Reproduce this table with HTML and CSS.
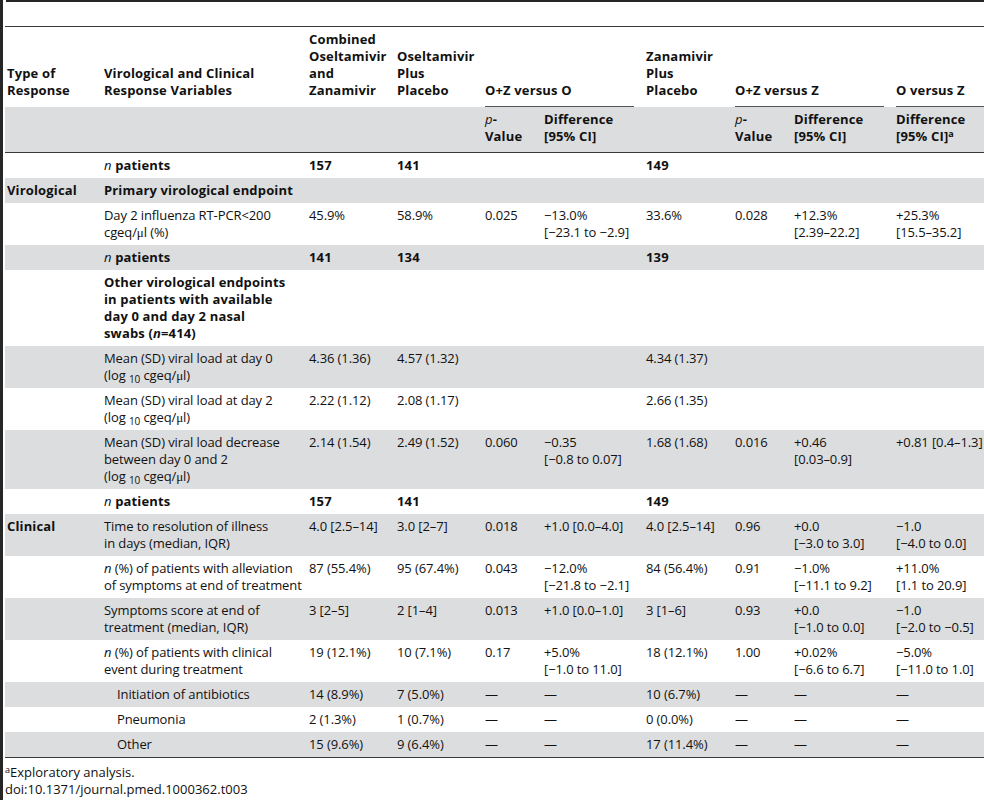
FILE: index.html
```html
<!DOCTYPE html>
<html lang="en">
<head>
  <meta charset="UTF-8">
  <title>Table 3. Virological and clinical responses</title>
  <link rel="stylesheet" href="styles.css">
</head>
<body>
  <div class="frame">
    <div class="topbar"></div>

    <table class="results">
      <colgroup>
        <col class="c-type">
        <col class="c-var">
        <col class="c-arm">
        <col class="c-arm">
        <col class="c-p">
        <col class="c-diff">
        <col class="c-arm2">
        <col class="c-p">
        <col class="c-diff">
        <col class="c-last">
      </colgroup>
      <thead>
        <tr class="head-top">
          <th>Type of<br>Response</th>
          <th>Virological and Clinical<br>Response Variables</th>
          <th>Combined<br>Oseltamivir<br>and<br>Zanamivir</th>
          <th>Oseltamivir<br>Plus<br>Placebo</th>
          <th colspan="2" class="group"><div>O+Z versus O</div></th>
          <th>Zanamivir<br>Plus<br>Placebo</th>
          <th colspan="2" class="group"><div>O+Z versus Z</div></th>
          <th class="group"><div>O versus Z</div></th>
        </tr>
        <tr class="head-sub">
          <th></th>
          <th></th>
          <th></th>
          <th></th>
          <th><i>p</i>-<br>Value</th>
          <th>Difference<br>[95% CI]</th>
          <th></th>
          <th><i>p</i>-<br>Value</th>
          <th>Difference<br>[95% CI]</th>
          <th>Difference<br>[95% CI]<sup>a</sup></th>
        </tr>
      </thead>
      <tbody>
        <tr class="count">
          <td></td>
          <td><i>n</i> <b>patients</b></td>
          <td>157</td>
          <td>141</td>
          <td></td>
          <td></td>
          <td>149</td>
          <td></td>
          <td></td>
          <td></td>
        </tr>
        <tr>
          <td><b>Virological</b></td>
          <td><b>Primary virological endpoint</b></td>
          <td></td><td></td><td></td><td></td><td></td><td></td><td></td><td></td>
        </tr>
        <tr>
          <td></td>
          <td>Day 2 influenza RT-PCR&lt;200<br>cgeq/<span class="mu">μ</span>l (%)</td>
          <td>45.9%</td>
          <td>58.9%</td>
          <td>0.025</td>
          <td>−13.0%<br>[−23.1 to −2.9]</td>
          <td>33.6%</td>
          <td>0.028</td>
          <td>+12.3%<br>[2.39–22.2]</td>
          <td>+25.3%<br>[15.5–35.2]</td>
        </tr>
        <tr class="count">
          <td></td>
          <td><i>n</i> <b>patients</b></td>
          <td>141</td>
          <td>134</td>
          <td></td>
          <td></td>
          <td>139</td>
          <td></td>
          <td></td>
          <td></td>
        </tr>
        <tr>
          <td></td>
          <td><b>Other virological endpoints<br>in patients with available<br>day 0 and day 2 nasal<br>swabs (<i>n</i>=414)</b></td>
          <td></td><td></td><td></td><td></td><td></td><td></td><td></td><td></td>
        </tr>
        <tr>
          <td></td>
          <td>Mean (SD) viral load at day 0<br>(log <sub>10</sub> cgeq/<span class="mu">μ</span>l)</td>
          <td>4.36 (1.36)</td>
          <td>4.57 (1.32)</td>
          <td></td>
          <td></td>
          <td>4.34 (1.37)</td>
          <td></td>
          <td></td>
          <td></td>
        </tr>
        <tr>
          <td></td>
          <td>Mean (SD) viral load at day 2<br>(log <sub>10</sub> cgeq/<span class="mu">μ</span>l)</td>
          <td>2.22 (1.12)</td>
          <td>2.08 (1.17)</td>
          <td></td>
          <td></td>
          <td>2.66 (1.35)</td>
          <td></td>
          <td></td>
          <td></td>
        </tr>
        <tr>
          <td></td>
          <td>Mean (SD) viral load decrease<br>between day 0 and 2<br>(log <sub>10</sub> cgeq/<span class="mu">μ</span>l)</td>
          <td>2.14 (1.54)</td>
          <td>2.49 (1.52)</td>
          <td>0.060</td>
          <td>−0.35<br>[−0.8 to 0.07]</td>
          <td>1.68 (1.68)</td>
          <td>0.016</td>
          <td>+0.46<br>[0.03–0.9]</td>
          <td>+0.81 [0.4–1.3]</td>
        </tr>
        <tr class="count">
          <td></td>
          <td><i>n</i> <b>patients</b></td>
          <td>157</td>
          <td>141</td>
          <td></td>
          <td></td>
          <td>149</td>
          <td></td>
          <td></td>
          <td></td>
        </tr>
        <tr>
          <td><b>Clinical</b></td>
          <td>Time to resolution of illness<br>in days (median, IQR)</td>
          <td>4.0 [2.5–14]</td>
          <td>3.0 [2–7]</td>
          <td>0.018</td>
          <td>+1.0 [0.0–4.0]</td>
          <td>4.0 [2.5–14]</td>
          <td>0.96</td>
          <td>+0.0<br>[−3.0 to 3.0]</td>
          <td>−1.0<br>[−4.0 to 0.0]</td>
        </tr>
        <tr>
          <td></td>
          <td><i>n</i> (%) of patients with alleviation<br>of symptoms at end of treatment</td>
          <td>87 (55.4%)</td>
          <td>95 (67.4%)</td>
          <td>0.043</td>
          <td>−12.0%<br>[−21.8 to −2.1]</td>
          <td>84 (56.4%)</td>
          <td>0.91</td>
          <td>−1.0%<br>[−11.1 to 9.2]</td>
          <td>+11.0%<br>[1.1 to 20.9]</td>
        </tr>
        <tr>
          <td></td>
          <td>Symptoms score at end of<br>treatment (median, IQR)</td>
          <td>3 [2–5]</td>
          <td>2 [1–4]</td>
          <td>0.013</td>
          <td>+1.0 [0.0–1.0]</td>
          <td>3 [1–6]</td>
          <td>0.93</td>
          <td>+0.0<br>[−1.0 to 0.0]</td>
          <td>−1.0<br>[−2.0 to −0.5]</td>
        </tr>
        <tr>
          <td></td>
          <td><i>n</i> (%) of patients with clinical<br>event during treatment</td>
          <td>19 (12.1%)</td>
          <td>10 (7.1%)</td>
          <td>0.17</td>
          <td>+5.0%<br>[−1.0 to 11.0]</td>
          <td>18 (12.1%)</td>
          <td>1.00</td>
          <td>+0.02%<br>[−6.6 to 6.7]</td>
          <td>−5.0%<br>[−11.0 to 1.0]</td>
        </tr>
        <tr>
          <td></td>
          <td class="sub-item">Initiation of antibiotics</td>
          <td>14 (8.9%)</td>
          <td>7 (5.0%)</td>
          <td>—</td>
          <td>—</td>
          <td>10 (6.7%)</td>
          <td>—</td>
          <td>—</td>
          <td>—</td>
        </tr>
        <tr>
          <td></td>
          <td class="sub-item">Pneumonia</td>
          <td>2 (1.3%)</td>
          <td>1 (0.7%)</td>
          <td>—</td>
          <td>—</td>
          <td>0 (0.0%)</td>
          <td>—</td>
          <td>—</td>
          <td>—</td>
        </tr>
        <tr>
          <td></td>
          <td class="sub-item">Other</td>
          <td>15 (9.6%)</td>
          <td>9 (6.4%)</td>
          <td>—</td>
          <td>—</td>
          <td>17 (11.4%)</td>
          <td>—</td>
          <td>—</td>
          <td>—</td>
        </tr>
      </tbody>
    </table>

    <div class="notes">
      <p><sup>a</sup>Exploratory analysis.</p>
      <p>doi:10.1371/journal.pmed.1000362.t003</p>
    </div>
  </div>
</body>
</html>
```

FILE: styles.css
```css
html, body {
  margin: 0;
  background: white;
  overflow: hidden;
}

body {
  font-family: 'Open Sans', 'Noto Sans', sans-serif;
  font-size: 13px;
  line-height: 17px;
  color: #111;
}

.frame {
  border-left: 3px solid #262626;
  padding-left: 2px;
  min-height: 800px;
  box-sizing: border-box;
}

.topbar {
  height: 2px;
  background: #262626;
  margin-left: 1px;
  margin-bottom: 24px;
}

.results {
  border-collapse: separate;
  border-spacing: 0;
  table-layout: fixed;
  width: 980px;
  border-top: 1px solid #3a3a3a;
  letter-spacing: -0.1px;
}

.c-type { width: 99px; }
.c-var  { width: 205px; }
.c-arm  { width: 88px; }
.c-p    { width: 59px; }
.c-diff { width: 102px; }
.c-arm2 { width: 89px; }
.c-last { width: 89px; }

.results th,
.results td {
  text-align: left;
  white-space: nowrap;
  padding: 4px 12px 4px 0;
  box-sizing: border-box;
}

.results th:first-child,
.results td:first-child {
  padding-left: 2px;
}

.results th:last-child,
.results td:last-child {
  padding-right: 0;
}

.results td {
  vertical-align: top;
  font-weight: normal;
}

.results th,
.results b,
.count td {
  font-weight: 700;
  letter-spacing: 0.15px;
}

.results th i,
.count td i {
  font-weight: normal;
}

.head-top th {
  vertical-align: bottom;
  padding-bottom: 8px;
}

.head-top th.group {
  padding-bottom: 0;
}

.head-top th.group div {
  padding-bottom: 7px;
  border-bottom: 1px solid #555;
}

.head-sub th {
  background: #dcdddf;
  vertical-align: top;
  padding-bottom: 7px;
  border-bottom: 1px solid #3a3a3a;
}

.results tbody tr:nth-child(even) td {
  background: #dcdddf;
}

.results tbody tr:last-child td {
  border-bottom: 1px solid #3a3a3a;
}

.sub-item {
  padding-left: 13px !important;
}

.mu {
  font-family: 'Liberation Serif', serif;
}

sub {
  font-size: 10px;
  line-height: 0;
  vertical-align: -3px;
}

sup {
  font-size: 9px;
  line-height: 0;
  position: relative;
  top: -4px;
  vertical-align: baseline;
}

.notes {
  padding-top: 6px;
}

.notes p {
  margin: 0;
}
```
